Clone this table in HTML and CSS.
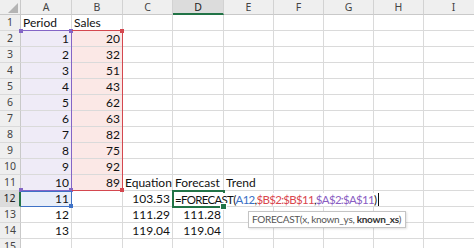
FILE: index.html
```html
<!DOCTYPE html>
<html>
<head>
<meta charset="utf-8">
<link rel="stylesheet" href="styles.css">
</head>
<body>
<div class="sheet">
  <div class="corner"><svg width="21" height="15" viewBox="0 0 21 15"><polygon points="8,13 18,13 18,3" fill="#b4b4b4"/></svg></div>
  <div class="ch">A</div><div class="ch">B</div><div class="ch">C</div><div class="ch sel">D</div><div class="ch">E</div><div class="ch">F</div><div class="ch">G</div><div class="ch">H</div><div class="ch">I</div>

  <div class="rh">1</div><div class="c">Period</div><div class="c">Sales</div><div class="c"></div><div class="c"></div><div class="c"></div><div class="c"></div><div class="c"></div><div class="c"></div><div class="c"></div>
  <div class="rh">2</div><div class="c num fa">1</div><div class="c num fb">20</div><div class="c"></div><div class="c"></div><div class="c"></div><div class="c"></div><div class="c"></div><div class="c"></div><div class="c"></div>
  <div class="rh">3</div><div class="c num fa">2</div><div class="c num fb">32</div><div class="c"></div><div class="c"></div><div class="c"></div><div class="c"></div><div class="c"></div><div class="c"></div><div class="c"></div>
  <div class="rh">4</div><div class="c num fa">3</div><div class="c num fb">51</div><div class="c"></div><div class="c"></div><div class="c"></div><div class="c"></div><div class="c"></div><div class="c"></div><div class="c"></div>
  <div class="rh">5</div><div class="c num fa">4</div><div class="c num fb">43</div><div class="c"></div><div class="c"></div><div class="c"></div><div class="c"></div><div class="c"></div><div class="c"></div><div class="c"></div>
  <div class="rh">6</div><div class="c num fa">5</div><div class="c num fb">62</div><div class="c"></div><div class="c"></div><div class="c"></div><div class="c"></div><div class="c"></div><div class="c"></div><div class="c"></div>
  <div class="rh">7</div><div class="c num fa">6</div><div class="c num fb">63</div><div class="c"></div><div class="c"></div><div class="c"></div><div class="c"></div><div class="c"></div><div class="c"></div><div class="c"></div>
  <div class="rh">8</div><div class="c num fa">7</div><div class="c num fb">82</div><div class="c"></div><div class="c"></div><div class="c"></div><div class="c"></div><div class="c"></div><div class="c"></div><div class="c"></div>
  <div class="rh">9</div><div class="c num fa">8</div><div class="c num fb">75</div><div class="c"></div><div class="c"></div><div class="c"></div><div class="c"></div><div class="c"></div><div class="c"></div><div class="c"></div>
  <div class="rh">10</div><div class="c num fa">9</div><div class="c num fb">92</div><div class="c"></div><div class="c"></div><div class="c"></div><div class="c"></div><div class="c"></div><div class="c"></div><div class="c"></div>
  <div class="rh">11</div><div class="c num fa">10</div><div class="c num fb">89</div><div class="c">Equation</div><div class="c">Forecast</div><div class="c">Trend</div><div class="c"></div><div class="c"></div><div class="c"></div><div class="c"></div>
  <div class="rh sel">12</div><div class="c num fc">11</div><div class="c"></div><div class="c num">103.53</div><div class="c"></div><div class="c"></div><div class="c"></div><div class="c"></div><div class="c"></div><div class="c"></div>
  <div class="rh">13</div><div class="c num">12</div><div class="c"></div><div class="c num">111.29</div><div class="c num">111.28</div><div class="c"></div><div class="c"></div><div class="c"></div><div class="c"></div><div class="c"></div>
  <div class="rh">14</div><div class="c num">13</div><div class="c"></div><div class="c num">119.04</div><div class="c num">119.04</div><div class="c"></div><div class="c"></div><div class="c"></div><div class="c"></div><div class="c"></div>
  <div class="rh">15</div><div class="c"></div><div class="c"></div><div class="c"></div><div class="c"></div><div class="c"></div><div class="c"></div><div class="c"></div><div class="c"></div><div class="c"></div>

  <!-- reference ranges of the formula being edited -->
  <div class="ref ref-a"><i class="hd tl"></i><i class="hd tr"></i><i class="hd bl"></i><i class="hd br"></i></div>
  <div class="ref ref-b"><i class="hd tr"></i><i class="hd br"></i></div>
  <div class="ref ref-x"><i class="hd br"></i></div>

  <!-- active cell D12 in edit mode -->
  <div class="active"></div>
  <div class="editor"><span class="edit">=FORECAST(<span class="k-blue">A12</span>,<span class="k-red">$B$2:$B$11</span>,<span class="k-purple">$A$2:$A$11</span>)<span class="caret"></span></span></div>
  <div class="fill-handle"></div>

  <div class="tip">FORECAST(x, known_ys, <b>known_xs</b>)</div>
</div>
</body>
</html>
```

FILE: styles.css
```css
html, body {
  margin: 0;
  padding: 0;
  background: #fff;
  overflow: hidden;
}

.sheet {
  position: relative;
  display: grid;
  grid-template-columns: 21px 51px 51px 50px 51px 50px 50px 50px 50px 60px;
  grid-template-rows: 15px repeat(15, 16px);
  font-family: Lato, "Liberation Sans", sans-serif;
  font-size: 12px;
  color: #111;
}

/* header strip */
.corner {
  background: #efefef;
  border-right: 1px solid #c9c9c9;
  border-bottom: 1px solid #c9c9c9;
  box-sizing: border-box;
  line-height: 0;
}
.corner svg { display: block; }

.ch, .rh {
  background: #efefef;
  color: #444;
  font-family: "Noto Sans", "Open Sans", sans-serif;
  font-size: 10.5px;
  text-align: center;
  box-sizing: border-box;
}
.ch {
  line-height: 14px;
  border-right: 1px solid #d2d2d2;
  border-bottom: 1px solid #c9c9c9;
}
.ch.sel {
  background: #dcdcdc;
  color: #222;
  border-bottom: 2px solid #217346;
}
.rh {
  line-height: 15px;
  border-right: 1px solid #c9c9c9;
  border-bottom: 1px solid #dadada;
}
.rh.sel {
  background: #dcdcdc;
  color: #222;
  border-right: 2px solid #217346;
}

/* cells */
.c {
  box-sizing: border-box;
  border-right: 1px solid #dadada;
  border-bottom: 1px solid #dadada;
  padding: 0 2px;
  line-height: 15px;
  white-space: nowrap;
}
.num { text-align: right; }
.fa { background: #efebf7; }
.fb { background: #fbe8e6; }
.fc { background: #e8eef9; }

/* coloured reference boxes */
.ref {
  position: absolute;
  box-sizing: border-box;
  z-index: 2;
}
.ref-a {
  grid-column: 2 / 3;
  grid-row: 3 / 13;
  top: -1px; left: 0; right: 0; bottom: 0;
  border: 1px solid #8465c6;
  border-left: none;
  color: #8465c6;
}
.ref-b {
  grid-column: 3 / 4;
  grid-row: 3 / 13;
  top: -1px; left: 0; right: 0; bottom: 0;
  border: 1px solid #d4474f;
  border-left: none;
  color: #d4474f;
}
.ref-x {
  grid-column: 2 / 3;
  grid-row: 13 / 14;
  top: 0; left: 0; right: 0; bottom: 0;
  border: 1px solid #3f72c6;
  border-left: none;
  color: #3f72c6;
}
.hd {
  position: absolute;
  width: 4px;
  height: 4px;
  background: currentColor;
}
.hd.tl { top: -2px; left: -2px; }
.hd.tr { top: -2px; right: -2px; }
.hd.bl { bottom: -2px; left: -2px; }
.hd.br { bottom: -2px; right: -2px; }

/* active cell */
.active {
  position: absolute;
  grid-column: 5 / 6;
  grid-row: 13 / 14;
  top: -1px; left: -1px; right: -1px; bottom: -1px;
  border: 2px solid #217346;
  z-index: 3;
}
.editor {
  position: absolute;
  grid-column: 5 / 10;
  grid-row: 13 / 14;
  top: 1px; left: 1px;
  z-index: 4;
  white-space: nowrap;
}
.edit {
  display: inline-block;
  background: #fff;
  font-size: 11.5px;
  letter-spacing: -0.7px;
  line-height: 13px;
  padding: 0 2px 0 1px;
  color: #111;
}
.k-blue { color: #3a6fc4; }
.k-red { color: #d9464e; }
.k-purple { color: #8a5dc2; }
.caret {
  display: inline-block;
  width: 1px;
  height: 13px;
  background: #111;
  vertical-align: top;
  margin-left: 2px;
}
.fill-handle {
  position: absolute;
  grid-column: 5 / 6;
  grid-row: 13 / 14;
  right: -3px;
  bottom: -3px;
  width: 5px;
  height: 5px;
  background: #217346;
  border: 1px solid #fff;
  z-index: 5;
}

/* function argument tooltip */
.tip {
  position: absolute;
  left: 248px;
  top: 211px;
  height: 17px;
  box-sizing: border-box;
  padding: 0 4px 0 3px;
  background: #fff;
  border: 1px solid #c4c4c4;
  box-shadow: 1px 1px 2px rgba(0, 0, 0, 0.12);
  font-family: Lato, "Noto Sans", sans-serif;
  font-size: 10px;
  letter-spacing: -0.3px;
  line-height: 15px;
  color: #555;
  white-space: nowrap;
  z-index: 6;
}
.tip b { color: #333; }
```
